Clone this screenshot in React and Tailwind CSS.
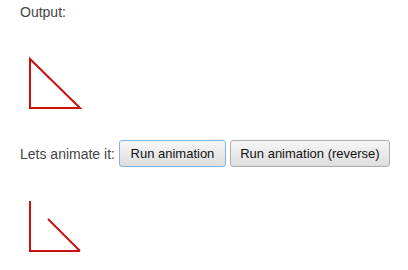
import React from 'react';

const Triangle = ({ partial }) => (
    <svg width="80" height="90" className="block">
        {partial ? (
            <>
                <polyline points="10,21 10,71 60,71" fill="none" stroke="#cc1111" strokeWidth="2" />
                <line x1="28" y1="39" x2="60" y2="71" stroke="#cc1111" strokeWidth="2" />
            </>
        ) : (
            <polygon points="10,19 10,68 60,68" fill="none" stroke="#cc1111" strokeWidth="2" />
        )}
    </svg>
);

const App = () => {
    return (
        <div className="w-[408px] h-[270px] bg-white overflow-hidden px-[20px] pt-[4px] text-[14px] leading-[16px] text-[#444] font-['Liberation_Sans',Arial,sans-serif]">
            <div>Output:</div>
            <div className="mt-[20px]">
                <Triangle />
            </div>
            <div className="flex items-center mt-[10px] h-[27px] whitespace-nowrap">
                <span className="mr-[4px] shrink-0">Lets animate it:</span>
                <button
                    type="button"
                    className="h-[27px] w-[107px] shrink-0 px-0 text-[13px] text-[#111] rounded-[3px] border border-[#7eb4ea] bg-gradient-to-b from-[#f6f6f6] to-[#dedede] mr-[4px]"
                >
                    Run animation
                </button>
                <button
                    type="button"
                    className="h-[27px] w-[160px] shrink-0 px-0 text-[13px] text-[#111] rounded-[3px] border border-[#adadad] bg-gradient-to-b from-[#f6f6f6] to-[#dedede]"
                >
                    Run animation (reverse)
                </button>
            </div>
            <div className="mt-[13px]">
                <Triangle partial />
            </div>
        </div>
    );
};

export default App;
